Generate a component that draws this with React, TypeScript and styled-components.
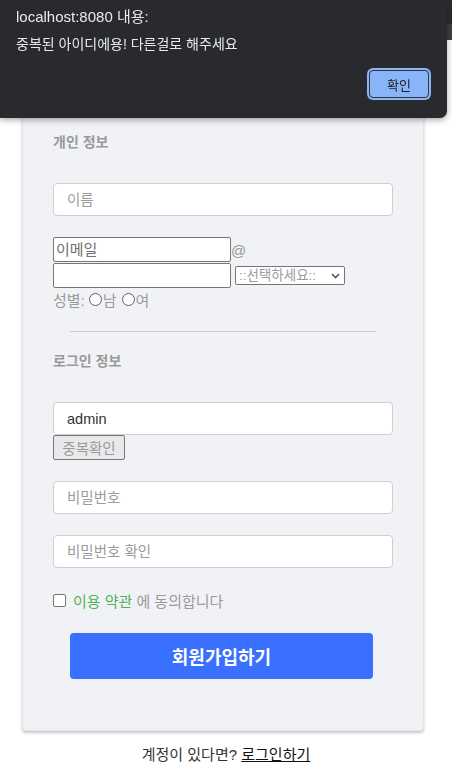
import styled, { createGlobalStyle } from "styled-components";

const GlobalStyle = createGlobalStyle`
  html, body {
    margin: 0;
    padding: 0;
    background: #ffffff;
    font-family: "Liberation Sans", "Noto Sans CJK KR", sans-serif;
  }
  * {
    box-sizing: border-box;
  }
`;

const Page = styled.div(() => ({
  width: "452px",
  minHeight: "771px",
  paddingTop: "30px",
  position: "relative",
}));

const Card = styled.form(() => ({
  width: "402px",
  marginLeft: "22px",
  padding: "101px 0 51px 30px",
  background: "#f1f2f6",
  border: "1px solid #e6e6ea",
  borderRadius: "4px",
  boxShadow: "0 2px 3px rgba(0,0,0,0.22)",
  display: "flex",
  flexDirection: "column",
  alignItems: "flex-start",
}));

const SectionTitle = styled.h4<{ $top?: number }>(({ $top = 0 }) => ({
  margin: `${$top}px 0 0 0`,
  height: "20px",
  lineHeight: "20px",
  fontSize: "14px",
  fontWeight: 700,
  color: "#999999",
}));

const TextInput = styled.input<{ $top: number }>(({ $top }) => ({
  marginTop: `${$top}px`,
  width: "340px",
  height: "33px",
  padding: "0 13px",
  border: "1px solid #cfcfd3",
  borderRadius: "4px",
  background: "#fff",
  fontFamily: "inherit",
  fontSize: "14.5px",
  color: "#333",
  outline: "none",
  "&::placeholder": {
    color: "#9b9b9b",
  },
}));

const EmailRow = styled.div<{ $top: number }>(({ $top }) => ({
  marginTop: `${$top}px`,
  height: "25px",
  display: "flex",
  alignItems: "center",
}));

const PlainInput = styled.input(() => ({
  width: "178px",
  height: "25px",
  padding: "0 2px",
  border: "1px solid #767676",
  borderRadius: "2px",
  background: "#fff",
  fontFamily: "inherit",
  fontSize: "15px",
  outline: "none",
  "&::placeholder": {
    color: "#6f6f6f",
  },
}));

const At = styled.span(() => ({
  height: "25px",
  lineHeight: "25px",
  paddingTop: "1px",
  fontSize: "15px",
  color: "#999",
}));

const SelectBox = styled.div(() => ({
  marginLeft: "4px",
  width: "110px",
  height: "19px",
  border: "1px solid #767676",
  borderRadius: "2px",
  background: "#fff",
  display: "flex",
  alignItems: "center",
  justifyContent: "space-between",
  padding: "0 4px 0 3px",
  fontSize: "13.5px",
  color: "#9c9c9c",
  lineHeight: "17px",
}));

const GenderRow = styled.div(() => ({
  marginTop: "1px",
  height: "20px",
  display: "flex",
  alignItems: "center",
  fontSize: "15px",
  color: "#9a9a9a",
}));

const Radio = styled.span<{ $first?: boolean }>(({ $first }) => ({
  display: "inline-block",
  width: "13px",
  height: "13px",
  borderRadius: "50%",
  border: "1px solid #5f5f5f",
  background: "#fff",
  margin: $first ? "0 1px 0 4px" : "0 1px 0 5px",
}));

const Divider = styled.hr(() => ({
  margin: "22px 0 0 17px",
  width: "306px",
  height: "1px",
  border: "none",
  background: "#cacaca",
}));

const DupButton = styled.button(() => ({
  width: "72px",
  height: "25px",
  padding: 0,
  border: "1px solid #767676",
  borderRadius: "2px",
  background: "#e9e9eb",
  fontFamily: "inherit",
  fontSize: "14.5px",
  color: "#9a9a9a",
}));

const AgreeRow = styled.label(() => ({
  marginTop: "22px",
  height: "20px",
  display: "flex",
  alignItems: "center",
  fontSize: "15px",
  color: "#9a9a9a",
}));

const Check = styled.span(() => ({
  width: "13px",
  height: "13px",
  border: "1px solid #767676",
  borderRadius: "2px",
  background: "#fff",
  marginRight: "7px",
}));

const Terms = styled.span(() => ({
  color: "#4fb354",
  marginRight: "4px",
}));

const Submit = styled.button(() => ({
  marginTop: "23px",
  marginLeft: "17px",
  width: "303px",
  height: "46px",
  border: "none",
  borderRadius: "4px",
  background: "#3a70ff",
  color: "#fff",
  fontFamily: '"Noto Sans CJK KR", sans-serif',
  fontSize: "18px",
  fontWeight: 700,
}));

const Footer = styled.p(() => ({
  margin: "14px 0 0 0",
  height: "20px",
  lineHeight: "20px",
  textAlign: "center",
  fontSize: "15px",
  color: "#333",
}));

const LoginLink = styled.a(() => ({
  color: "#111",
  textDecoration: "underline",
}));

const Dialog = styled.div(() => ({
  position: "fixed",
  top: 0,
  left: 0,
  width: "447px",
  height: "118px",
  background: "#292a2d",
  borderBottomRightRadius: "7px",
  boxShadow: "0 2px 6px rgba(0,0,0,0.35)",
  padding: "7px 16px 0 16px",
  color: "#e8eaed",
  zIndex: 10,
}));

const DialogTitle = styled.div(() => ({
  height: "20px",
  lineHeight: "20px",
  fontSize: "15px",
}));

const DialogMessage = styled.div(() => ({
  marginTop: "7px",
  height: "20px",
  lineHeight: "20px",
  fontSize: "14px",
}));

const DialogActions = styled.div(() => ({
  marginTop: "16px",
  display: "flex",
  justifyContent: "flex-end",
}));

const OkButton = styled.button(() => ({
  width: "60px",
  height: "28px",
  marginRight: "2px",
  border: "1px solid #35363a",
  borderRadius: "4px",
  background: "#8ab4f8",
  boxShadow: "0 0 0 2px #8ab4f8",
  color: "#202124",
  fontFamily: '"Noto Sans CJK KR", sans-serif',
  fontSize: "13px",
  padding: 0,
}));

const EdgeStrip = styled.div(() => ({
  position: "fixed",
  top: 0,
  right: 0,
  width: "5px",
  height: "40px",
  background: "linear-gradient(#2b2c30 0 24px, #3e3f43 24px)",
  zIndex: 5,
}));

export default function App() {
  return (
    <>
      <GlobalStyle />
      <Page>
        <Card onSubmit={(e) => e.preventDefault()}>
          <SectionTitle>개인 정보</SectionTitle>
          <TextInput $top={31} placeholder="이름" />
          <EmailRow $top={21}>
            <PlainInput placeholder="이메일" />
            <At>@</At>
          </EmailRow>
          <EmailRow $top={1}>
            <PlainInput />
            <SelectBox>
              <span>::선택하세요::</span>
              <svg width="9" height="6" viewBox="0 0 9 6">
                <path d="M1 1l3.5 3.5L8 1" fill="none" stroke="#555" strokeWidth="1.6" />
              </svg>
            </SelectBox>
          </EmailRow>
          <GenderRow>
            성별:
            <Radio $first />남
            <Radio />여
          </GenderRow>
          <Divider />
          <SectionTitle $top={19}>로그인 정보</SectionTitle>
          <TextInput $top={31} defaultValue="admin" />
          <DupButton type="button">중복확인</DupButton>
          <TextInput $top={21} type="password" placeholder="비밀번호" />
          <TextInput $top={21} type="password" placeholder="비밀번호 확인" />
          <AgreeRow>
            <Check />
            <Terms>이용 약관</Terms>에 동의합니다
          </AgreeRow>
          <Submit type="submit">회원가입하기</Submit>
        </Card>
        <Footer>
          계정이 있다면? <LoginLink href="#">로그인하기</LoginLink>
        </Footer>
      </Page>
      <EdgeStrip />
      <Dialog>
        <DialogTitle>localhost:8080 내용:</DialogTitle>
        <DialogMessage>중복된 아이디에용! 다른걸로 해주세요</DialogMessage>
        <DialogActions>
          <OkButton type="button">확인</OkButton>
        </DialogActions>
      </Dialog>
    </>
  );
}
